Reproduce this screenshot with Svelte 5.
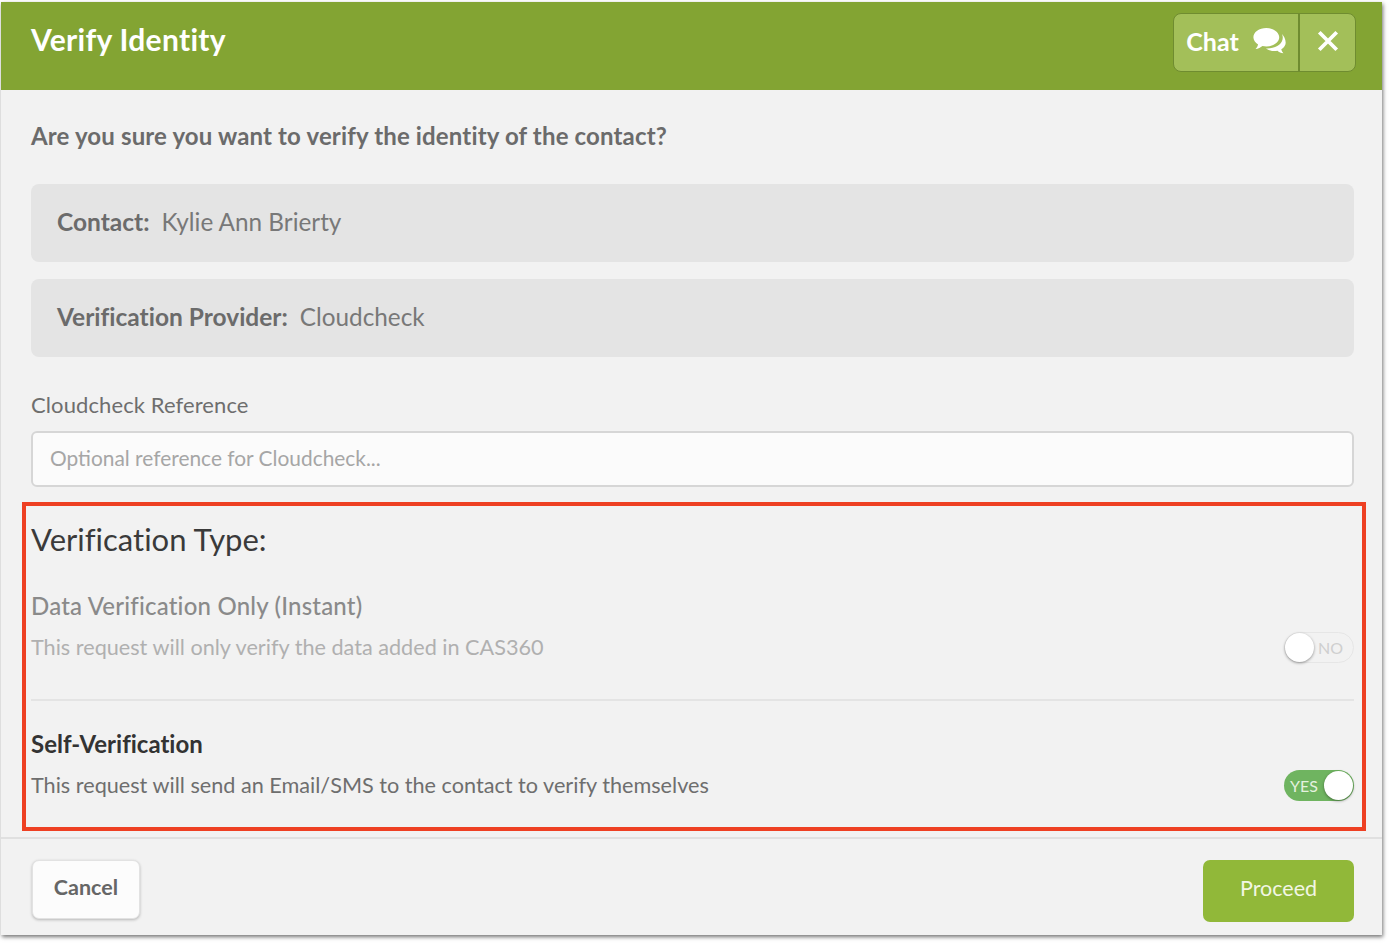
<script>
  let reference = $state('');
</script>

<div class="page">
  <div class="modal">
    <header class="head">
      <h1>Verify Identity</h1>
      <div class="head-btns">
        <button class="chat">
          Chat
          <svg viewBox="0 0 31 26" width="34" height="28" aria-hidden="true">
            <path fill="#fff" d="M13 1C6.400 1 1 4.900 1 9.600c0 2.700 1.700 5 4.400 6.600-.4 1.600-1.200 3-2.400 4.200 2.500-.3 4.700-1.300 6.400-2.800 1.200.3 2.400.4 3.600.4 6.600 0 12-3.700 12-8.400S19.600 1 13 1z"/>
            <path fill="#fff" d="M27.500 6.500c.5 1 .8 2.100.8 3.200 0 5.800-6.200 10.200-14.300 10.200h-1.300c2 1.500 4.800 2.400 7.800 2.400 1 0 1.900-.1 2.800-.3 1.500 1.300 3.400 2.100 5.600 2.400-1-1-1.700-2.300-2-3.700 2.600-1.500 4.100-3.600 4.100-6 0-3.400-1.700-6.200-3.500-8.200z"/>
          </svg>
        </button>
        <button class="close" aria-label="Close">
          <svg viewBox="0 0 22 22" width="24" height="24" aria-hidden="true">
            <path d="M3 3l16 16M19 3L3 19" stroke="#fff" stroke-width="3.400" fill="none"/>
          </svg>
        </button>
      </div>
    </header>

    <div class="body">
      <p class="question">Are you sure you want to verify the identity of the contact?</p>

      <div class="info"><b>Contact:</b><span>Kylie Ann Brierty</span></div>
      <div class="info"><b>Verification Provider:</b><span>Cloudcheck</span></div>

      <label class="ref-label" for="ref">Cloudcheck Reference</label>
      <input id="ref" type="text" bind:value={reference} placeholder="Optional reference for Cloudcheck..." />

      <section class="types">
        <h2>Verification Type:</h2>

        <div class="option off">
          <h3>Data Verification Only (Instant)</h3>
          <div class="row">
            <p>This request will only verify the data added in CAS360</p>
            <div class="toggle no"><i></i><span>NO</span></div>
          </div>
        </div>

        <hr />

        <div class="option">
          <h3>Self-Verification</h3>
          <div class="row">
            <p>This request will send an Email/SMS to the contact to verify themselves</p>
            <div class="toggle yes"><span>YES</span><i></i></div>
          </div>
        </div>
      </section>
    </div>

    <footer class="foot">
      <button class="cancel">Cancel</button>
      <button class="proceed">Proceed</button>
    </footer>
  </div>
</div>

<style>
  :global(body) {
    margin: 0;
    background: #fff;
    font-family: Lato, "Open Sans", sans-serif;
    font-variant-ligatures: none;
  }

  .page {
    width: 1392px;
    height: 948px;
    padding: 2px 0 0 1px;
    box-sizing: border-box;
    overflow: hidden;
  }

  .modal {
    width: 1381px;
    height: 933px;
    background: #f2f2f2;
    box-shadow: 1px 2px 4px rgba(0, 0, 0, 0.55);
    display: flex;
    flex-direction: column;
  }

  .head {
    height: 88px;
    flex: none;
    background: #83a433;
    display: flex;
    justify-content: space-between;
    padding: 11px 26px 0 30px;
    box-sizing: border-box;
  }

  h1 {
    margin: 5px 0 0;
    font-size: 30px;
    line-height: 42px;
    font-weight: 700;
    color: #fff;
    letter-spacing: 0.3px;
  }

  .head-btns {
    display: flex;
    height: 59px;
    border: 1px solid #6f8c30;
    border-radius: 8px;
    overflow: hidden;
    box-sizing: border-box;
    background: #a3bf59;
  }

  .head-btns button {
    border: none;
    background: none;
    color: #fff;
    padding: 0 0 3px;
    display: flex;
    align-items: center;
    justify-content: center;
    font: 700 25px Lato, sans-serif;
  }

  .chat {
    width: 126px;
    gap: 13px;
    border-right: 2px solid #6f8c30 !important;
  }

  .close {
    width: 55px;
  }

  .body {
    flex: 1;
    padding: 0 28px 0 30px;
    display: flex;
    flex-direction: column;
  }

  .question {
    margin: 29px 0 31px;
    font-size: 24px;
    line-height: 34px;
    font-weight: 700;
    letter-spacing: 0.15px;
    color: #6b6b6b;
  }

  .info {
    height: 78px;
    flex: none;
    margin-bottom: 17px;
    padding: 0 0 4px 26px;
    box-sizing: border-box;
    background: #e4e4e4;
    border-radius: 8px;
    display: flex;
    align-items: center;
    gap: 12px;
    font-size: 24.300px;
    color: #787878;
  }

  .info b {
    font-size: 24.500px;
    color: #6b6b6b;
  }

  .ref-label {
    margin-top: 16px;
    font-size: 22px;
    line-height: 30px;
    letter-spacing: 0.1px;
    color: #6e6e6e;
  }

  input {
    margin-top: 11px;
    height: 56px;
    flex: none;
    box-sizing: border-box;
    padding: 0 17px 3px;
    border: 2px solid #d6d6d6;
    border-radius: 6px;
    background: #fbfbfb;
    font: 20.900px Lato, sans-serif;
    outline: none;
  }

  input::placeholder {
    color: #a6a6a6;
    opacity: 1;
  }

  .types {
    margin: 15px -12px 0 -9px;
    height: 329px;
    flex: none;
    box-sizing: border-box;
    border: 4px solid #ee4023;
    padding: 0 8px 0 5px;
  }

  h2 {
    margin: 11px 0 0;
    font-size: 31px;
    line-height: 44px;
    font-weight: 400;
    color: #3a3a3a;
  }

  h3 {
    margin: 0;
    font-size: 24px;
    line-height: 34px;
  }

  .option {
    color: #333;
  }

  .option.off h3 {
    color: #8a8a8a;
    font-weight: 500;
    letter-spacing: 0.2px;
  }

  .option.off {
    margin-top: 28px;
  }

  .row {
    margin-top: 8px;
    display: flex;
    justify-content: space-between;
    align-items: center;
  }

  .row p {
    margin: 0;
    font-size: 21.650px;
    line-height: 32px;
    color: #6e6e6e;
  }

  .option.off .row p {
    color: #b0b0b0;
  }

  hr {
    margin: 36px 0 26px;
    border: none;
    border-top: 2px solid #e4e4e4;
  }

  .toggle {
    width: 70px;
    height: 31px;
    border-radius: 16px;
    box-sizing: border-box;
    display: flex;
    align-items: center;
    justify-content: space-between;
    font-size: 16px;
  }

  .toggle i {
    width: 29px;
    height: 29px;
    border-radius: 50%;
    background: #fff;
    box-shadow: 0 1px 3px rgba(0, 0, 0, 0.4);
  }

  .toggle.no {
    border: 1px solid #e6e6e6;
    color: #cfcfcf;
    padding-right: 10px;
  }

  .toggle.yes {
    background: #6fb460;
    color: #e4f1df;
    padding: 0 1px 0 6px;
  }

  .foot {
    height: 98px;
    flex: none;
    box-sizing: border-box;
    border-top: 2px solid #e0e0e0;
    padding: 21px 28px 0 31px;
    display: flex;
    justify-content: space-between;
    align-items: flex-start;
  }

  .foot button {
    font: 21.500px Lato, sans-serif;
    border-radius: 7px;
    height: 62px;
    padding: 0 0 6px;
  }

  .cancel {
    width: 108px;
    height: 59px !important;
    font-weight: 700 !important;
    color: #666;
    background: #fcfcfc;
    border: 1px solid #e2e2e2;
    box-shadow: 0 1px 3px rgba(0, 0, 0, 0.25);
  }

  .proceed {
    width: 151px;
    border: none;
    background: #91b839;
    color: #f2f6e4;
  }
</style>
